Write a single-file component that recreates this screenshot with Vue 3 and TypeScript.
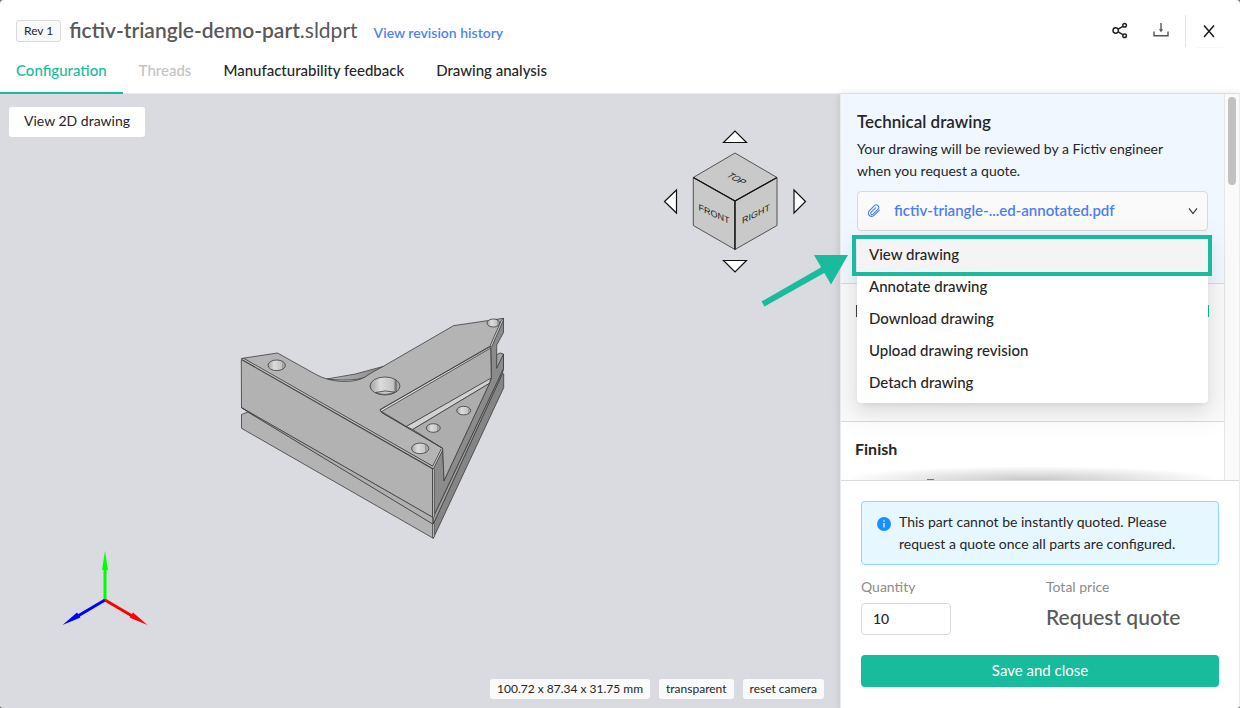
<script setup lang="ts">
import { ref } from 'vue'

interface Tab {
  label: string
  disabled?: boolean
}

interface Hole {
  cx: number
  cy: number
  rx: number
  ry: number
}

const tabs: Tab[] = [
  { label: 'Configuration' },
  { label: 'Threads', disabled: true },
  { label: 'Manufacturability feedback' },
  { label: 'Drawing analysis' },
]
const activeTab = ref('Configuration')

const drawingActions: string[] = [
  'View drawing',
  'Annotate drawing',
  'Download drawing',
  'Upload drawing revision',
  'Detach drawing',
]

const holes: Hole[] = [
  { cx: 46.7, cy: 60.3, rx: 8.7, ry: 5.3 },
  { cx: 190.2, cy: 143.4, rx: 8.7, ry: 5.3 },
  { cx: 203.3, cy: 123, rx: 7, ry: 4.3 },
  { cx: 233.7, cy: 105.6, rx: 7, ry: 4.3 },
  { cx: 263.3, cy: 18, rx: 6.3, ry: 4 },
]

const quantity = ref('10')
</script>

<template>
  <div class="page">
    <header class="header">
      <div class="title-row">
        <span class="rev">Rev 1</span>
        <div class="heading">
          <h1 class="title">fictiv-triangle-demo-part<span class="ext">.sldprt</span></h1>
          <a class="history" href="#">View revision history</a>
        </div>
        <div class="actions">
          <button class="icon-btn" type="button" aria-label="Share">
            <svg width="16" height="18" viewBox="0 0 16 18" fill="none" stroke="#222" stroke-width="1.5">
              <circle cx="3.7" cy="8.500" r="2.700" />
              <circle cx="12.600" cy="3.200" r="1.800" />
              <circle cx="12.600" cy="13.800" r="1.800" />
              <path d="M6.200 7.100 L10.900 4.300 M6.200 9.900 L10.900 12.700" />
            </svg>
          </button>
          <button class="icon-btn" type="button" aria-label="Download">
            <svg width="16" height="18" viewBox="0 0 16 18" fill="none" stroke="#555" stroke-width="1.4">
              <path d="M1 9.500 V13.800 H15 V9.500" />
              <path d="M8 1 V8" />
              <path d="M5.800 7.200 H10.200 L8 10.200 Z" fill="#555" stroke="none" />
            </svg>
          </button>
          <span class="divider"></span>
          <button class="close" type="button" aria-label="Close">
            <svg width="12" height="14" viewBox="0 0 12 14" fill="none" stroke="#1a1a1a" stroke-width="1.5">
              <path d="M1 1.500 L11 13 M11 1.500 L1 13" />
            </svg>
          </button>
        </div>
      </div>
      <nav class="tabs">
        <button
          v-for="tab in tabs"
          :key="tab.label"
          type="button"
          class="tab"
          :class="{ active: tab.label === activeTab }"
          :disabled="tab.disabled"
          @click="activeTab = tab.label"
        >{{ tab.label }}</button>
      </nav>
    </header>

    <div class="body">
      <main class="viewer">
        <button class="view-2d" type="button">View 2D drawing</button>

        <svg class="cube" width="180" height="180" viewBox="0 0 180 180">
          <g fill="#fff" stroke="#111" stroke-width="1.2">
            <path d="M73.5 32.5 L85 21 L96.5 32.5 Z" />
            <path d="M73.5 150.5 L85 162 L96.5 150.5 Z" />
            <path d="M26.5 80 L14.5 91.5 L26.5 103 Z" />
            <path d="M144 80 L155.500 91.500 L144 103 Z" />
          </g>
          <g fill="#c9c9ca" stroke="#444" stroke-width="0.900">
            <path d="M85 43 L127 67.500 L85 91 L43.300 67.500 Z" />
            <path d="M43.300 67.500 L85 91 V139.500 L43.300 115.500 Z" />
            <path d="M127 67.500 L85 91 V139.500 L127 115.500 Z" />
          </g>
          <path d="M43.300 67.500 L85 91 L127 67.500 M85 91 V139.500" fill="none" stroke="#111" stroke-width="1.300" />
          <text class="face" transform="translate(64 107) skewY(24)" text-anchor="middle">FRONT</text>
          <text class="face" transform="translate(106 107) skewY(-27)" text-anchor="middle">RIGHT</text>
          <text class="face" transform="translate(83.500 70.500) rotate(30) skewX(-30)" text-anchor="middle">TOP</text>
        </svg>

        <svg class="model" width="290" height="240" viewBox="0 0 290 240" stroke-linejoin="round">
          <defs>
            <linearGradient id="bore" x1="0" x2="1">
              <stop offset="0" stop-color="#a2a2a2" />
              <stop offset="0.35" stop-color="#dcdcdc" />
              <stop offset="0.78" stop-color="#c4c4c4" />
              <stop offset="0.8" stop-color="#9a9a9a" />
              <stop offset="1" stop-color="#b4b4b4" />
            </linearGradient>
            <linearGradient id="cove" x1="0" x2="1">
              <stop offset="0" stop-color="#b8b8b8" />
              <stop offset="0.6" stop-color="#9c9c9c" />
              <stop offset="1" stop-color="#858585" />
            </linearGradient>
          </defs>
          <g stroke="#3c3c3c" stroke-width="0.800">
            <path d="M96.700 74 Q125 70.500 153 61.500 L145 67 Q133 78 96.700 74 Z" fill="url(#cove)" />
            <!-- lower slab -->
            <path d="M18 107 L11.500 109.500 V123.300 L203.300 233.300 V219 Z" fill="#b3b3b3" />
            <path d="M203.300 219 L272.500 68.300 L273.700 69 V82.700 L203.300 233.300 Z" fill="#858585" />
            <path d="M203.300 212.300 L273.500 63.500 L272.500 68.300 L203.300 219 Z" fill="#a2a2a2" />
            <!-- right side of the upper body -->
            <path d="M266 50 L270 48 L273.500 49 V63.500 L266 66 Z" fill="#a4a4a4" />
            <path d="M203 162 L212.700 143.300 L214 175.700 L259.500 78 L261.500 73.300 L260.700 41.500 L273.500 13.300 V27.500 L266.700 40 V63.300 L273.500 49 V63.500 L203 212.300 Z" fill="#8b8b8b" />
            <!-- top face -->
            <path d="M11.300 53.500 L47.500 48 L86 69.500 C100 77.500 124 79 135 72 Q142 67 153 61.500 L223.500 20.700 L273.500 13.300 L260.700 41.500 L150 104.500 L151.700 107.500 L212.700 143.300 L203 163.300 Z" fill="#b4b4b4" />
            <!-- pocket -->
            <path d="M151.700 106.500 L260.700 43 L261.300 73.300 L176.300 121.500 Z" fill="#aeaeae" />
            <path d="M176.300 121.500 L260.700 73.300 L259.500 78.300 L182.700 124.500 Z" fill="#d2d2d2" />
            <path d="M182.700 124.500 L259.500 78.300 L214 175.700 L212.700 143.300 Z" fill="#adadad" />
            <path d="M150 105 L260.700 40.700" fill="none" />
            <path d="M150 105 L151.700 107.500 L212.700 143.300" fill="none" />
            <!-- front face -->
            <path d="M11.300 54.500 L202.700 164 V212.300 L11.500 102.700 Z" fill="#b2b2b2" />
            <path d="M11.500 102.700 L202.700 212.300 V219 L18 107 Z" fill="#b0b0b0" />
          </g>
          <!-- bevels -->
          <g fill="none" stroke="#3c3c3c" stroke-width="2.600">
            <path d="M13 54 L203 162.500 L212 144.500" />
            <path d="M203.700 164 V212 M203.700 219 V232" />
            <path d="M261 41 L272.500 15" />
          </g>
          <g fill="none" stroke="#c2c2c2" stroke-width="1.200">
            <path d="M13 54 L203 162.500 L212 144.500" />
            <path d="M203.700 164 V212 M203.700 219 V232" />
            <path d="M261 41 L272.500 15" />
          </g>
          <g fill="url(#bore)" stroke="#3c3c3c" stroke-width="0.800">
            <ellipse v-for="(h, i) in holes" :key="i" :cx="h.cx" :cy="h.cy" :rx="h.rx" :ry="h.ry" />
            <ellipse cx="155" cy="81" rx="15" ry="9" />
            <path d="M145.500 87.500 Q155 84.500 165 87.200 Q155 91.500 145.500 87.500 Z" fill="#c8c8c8" />
            <path d="M166 75 V87" />
          </g>
        </svg>

        <svg class="triad" width="100" height="84" viewBox="0 0 100 84">
          <g stroke-width="3" fill="none">
            <path d="M50 52 V20" stroke="#0f0" />
            <path d="M50 52 L22 68.500" stroke="#00f" />
            <path d="M50 52 L78 68.500" stroke="#f00" />
          </g>
          <path d="M50 3 L53 22 H47 Z" fill="#0f0" />
          <path d="M7.500 77 L25.500 69.500 L22 64.500 Z" fill="#00f" />
          <path d="M92.500 77 L74.500 69.500 L78 64.500 Z" fill="#f00" />
        </svg>

        <div class="viewer-status">
          <span class="chip">100.72 x 87.34 x 31.75 mm</span>
          <button class="chip" type="button">transparent</button>
          <button class="chip" type="button">reset camera</button>
        </div>
      </main>

      <aside class="sidebar">
        <div class="scroller">
          <div class="sections">
            <section class="section drawing">
              <h2 class="section-title">Technical drawing</h2>
              <p class="section-text">Your drawing will be reviewed by a Fictiv engineer when you request a quote.</p>
              <div class="dropdown">
                <button class="file" type="button" aria-haspopup="menu" aria-expanded="true">
                  <svg width="14" height="14" viewBox="0 0 14 14" fill="none" stroke="#4a7ff5" stroke-width="1.1" stroke-linecap="round">
                    <path d="M12.300 6.200 L7.100 11.400 A3.300 3.300 0 0 1 2.300 6.800 L7.400 1.700 A2.500 2.500 0 0 1 11 5.200 L6.100 10.100 A1.300 1.300 0 0 1 4.200 8.200 L8.600 3.800" />
                  </svg>
                  <span class="file-name">fictiv-triangle-...ed-annotated.pdf</span>
                  <svg width="10" height="8" viewBox="0 0 10 8" fill="none" stroke="#333" stroke-width="1.200">
                    <path d="M1 1.300 L5 6.500 L9 1.300" />
                  </svg>
                </button>
                <div class="menu" role="menu">
                  <button v-for="action in drawingActions" :key="action" class="menu-item" type="button" role="menuitem">{{ action }}</button>
                </div>
                <div class="highlight"></div>
                <svg class="pointer" width="90" height="56" viewBox="0 0 90 56" fill="#18bc9c">
                  <path d="M4.500 53.500 L1.500 48.500 L62.500 13.500 L66 19 Z" />
                  <path d="M54 2 H88 L71 31.500 Z" />
                </svg>
              </div>
            </section>
            <section class="section covered">
              <span class="edge dark"></span>
              <span class="edge teal"></span>
            </section>
            <section class="section finish">
              <h2 class="section-title strong">Finish</h2>
              <span class="radio-top"></span>
            </section>
          </div>
          <div class="track"><div class="thumb"></div></div>
        </div>

        <footer class="summary">
          <div class="alert" role="status">
            <svg width="14" height="14" viewBox="0 0 14 14">
              <circle cx="7" cy="7" r="7" fill="#1890ff" />
              <rect x="6.400" y="6" width="1.200" height="4.500" fill="#fff" />
              <circle cx="7" cy="4" r="0.800" fill="#fff" />
            </svg>
            <p>This part cannot be instantly quoted. Please request a quote once all parts are configured.</p>
          </div>
          <div class="totals">
            <div class="field">
              <label class="label" for="quantity">Quantity</label>
              <input id="quantity" v-model="quantity" class="quantity" type="text" />
            </div>
            <div class="field">
              <span class="label">Total price</span>
              <span class="price">Request quote</span>
            </div>
          </div>
          <button class="save" type="button">Save and close</button>
        </footer>
      </aside>
    </div>
  </div>
</template>

<style>
body {
  margin: 0;
  background: #777;
}
</style>

<style scoped>
* {
  box-sizing: border-box;
}

.page {
  display: flex;
  flex-direction: column;
  height: 100vh;
  border-radius: 4px;
  overflow: hidden;
  background: #fff;
  color: #262626;
  font-family: Lato, "Open Sans", sans-serif;
  font-size: 14px;
  line-height: 22px;
}

button,
input {
  margin: 0;
  font: inherit;
  color: inherit;
}

button {
  padding: 0;
  border: 0;
  background: none;
  cursor: pointer;
}

h1,
h2,
p {
  margin: 0;
}

svg {
  display: block;
  flex: none;
}

.header {
  border-bottom: 1px solid #ebebeb;
}

.title-row {
  display: flex;
  align-items: center;
  height: 48px;
  padding: 14px 16px 0;
}

.rev {
  padding: 0 7px;
  border: 1px solid #d9d9d9;
  border-radius: 3px;
  background: #fafafa;
  font-size: 12px;
  line-height: 20px;
}

.heading {
  display: flex;
  align-items: baseline;
  gap: 16px;
  margin-left: 8px;
  padding-bottom: 3px;
}

.title {
  color: #595959;
  font-size: 21px;
  font-weight: 600;
  line-height: 28px;
}

.ext {
  font-weight: 400;
}

.history {
  color: #4f82f5;
  font-weight: 600;
  text-decoration: none;
}

.actions {
  display: flex;
  align-items: center;
  gap: 25px;
  margin-left: auto;
}

.divider {
  width: 1px;
  height: 32px;
  margin-left: -9px;
  background: #e4e4e4;
}

.close {
  display: flex;
  align-items: center;
  justify-content: center;
  width: 32px;
  height: 32px;
  margin-left: -18px;
  margin-right: -1px;
  border-radius: 4px;
  box-shadow: 0 1px 1px rgba(0, 0, 0, 0.03);
}

.tabs {
  display: flex;
  height: 45px;
}

.tab {
  height: 46px;
  padding: 0 16px;
  border-bottom: 2px solid transparent;
  font-size: 15px;
  font-weight: 500;
}

.tab.active {
  border-color: #18bc9c;
  color: #18bc9c;
}

.tab:disabled {
  color: #c4c4c4;
}

.body {
  display: flex;
  flex: 1;
  min-height: 0;
}

.viewer {
  position: relative;
  flex: 1;
  min-width: 0;
  background: #dadbe0;
}

.view-2d {
  position: absolute;
  top: 13px;
  left: 9px;
  height: 30px;
  padding: 0 15px 2px;
  border-radius: 3px;
  background: #fff;
}

.cube {
  position: absolute;
  top: 16px;
  right: 10px;
}

.face {
  fill: #222;
  font-family: "Liberation Sans", Arial, sans-serif;
  font-size: 9px;
}

.model {
  position: absolute;
  top: 211px;
  left: 230px;
}

.triad {
  position: absolute;
  bottom: 76px;
  left: 55px;
}

.viewer-status {
  position: absolute;
  right: 16px;
  bottom: 9px;
  display: flex;
  gap: 9px;
}

.chip {
  padding: 0 7px;
  border-radius: 3px;
  background: #fafafa;
  font-size: 12px;
  line-height: 20px;
}

.sidebar {
  position: relative;
  display: flex;
  flex-direction: column;
  width: 400px;
  border-right: 1px solid #ebebeb;
  border-left: 1px solid #ebebeb;
  background: #fff;
  box-shadow: 0 0 8px rgba(0, 0, 0, 0.12);
}

.scroller {
  display: flex;
  flex: 1;
  min-height: 0;
}

.sections {
  display: flex;
  flex: 1;
  flex-direction: column;
}

.track {
  width: 15px;
  padding: 3px;
  border-left: 1px solid #e6e6e6;
  background: #fafafa;
}

.thumb {
  width: 8px;
  height: 88px;
  border-radius: 4px;
  background: #c1c1c1;
}

.section {
  padding: 16px;
  border-bottom: 1px solid #d9d9d9;
}

.drawing {
  padding-bottom: 52px;
  background: #f0f7ff;
}

.section-title {
  font-size: 17px;
  font-weight: 600;
  line-height: 24px;
}

.strong {
  font-size: 16px;
  font-weight: 700;
}

.section-text {
  margin: 4px 0 9px;
  padding-right: 24px;
}

.dropdown {
  position: relative;
}

.file {
  display: flex;
  align-items: center;
  gap: 13px;
  width: 100%;
  height: 40px;
  padding: 0 9px;
  border: 1px solid #d9d9d9;
  border-radius: 4px;
  background: #fafafa;
}

.file-name {
  flex: 1;
  padding-bottom: 2px;
  color: #4a7ff5;
  font-size: 15px;
  font-weight: 600;
  text-align: left;
}

.menu {
  position: absolute;
  top: 44px;
  right: 0;
  left: 0;
  z-index: 2;
  display: flex;
  flex-direction: column;
  padding: 4px 0;
  border-radius: 4px;
  background: #fff;
  box-shadow: 0 3px 6px -4px rgba(0, 0, 0, 0.12), 0 6px 16px rgba(0, 0, 0, 0.08), 0 9px 28px 8px rgba(0, 0, 0, 0.05);
}

.menu-item {
  height: 32px;
  padding: 0 12px 2px;
  font-size: 15px;
  font-weight: 500;
  text-align: left;
}

.menu-item:first-child {
  background: #f4f4f4;
}

.highlight {
  position: absolute;
  top: 44px;
  right: -4px;
  left: -5px;
  z-index: 3;
  height: 41px;
  border: 4px solid #18bc9c;
}

.pointer {
  position: absolute;
  top: 62px;
  left: -97px;
  z-index: 3;
}

.covered {
  display: flex;
  justify-content: space-between;
  height: 138px;
  padding: 21px 15px;
  background: #fafafa;
}

.edge {
  width: 1px;
  height: 12px;
}

.dark {
  background: #444;
}

.teal {
  background: #18bc9c;
}

.finish {
  position: relative;
  flex: 1;
  padding: 15px 14px 0;
  border-bottom: 0;
  overflow: hidden;
}

.finish::after {
  content: "";
  position: absolute;
  right: 0;
  bottom: 0;
  left: 0;
  height: 14px;
  background: radial-gradient(farthest-side at 50% 100%, rgba(0, 0, 0, 0.22), rgba(0, 0, 0, 0));
}

.radio-top {
  position: absolute;
  bottom: 0;
  left: 86px;
  z-index: 1;
  width: 7px;
  height: 1px;
  background: #4f74e8;
}

.summary {
  display: flex;
  flex-direction: column;
  padding: 20px 20px 21px;
  border-top: 1px solid #d9d9d9;
}

.alert {
  display: flex;
  gap: 8px;
  padding: 9px 15px;
  border: 1px solid #91d5ff;
  border-radius: 4px;
  background: #e6f7ff;
}

.alert svg {
  margin-top: 6px;
}

.totals {
  display: grid;
  grid-template-columns: 1fr 1fr;
  gap: 12px;
  margin: 11px 0 20px;
}

.field {
  display: flex;
  flex-direction: column;
  gap: 5px;
}

.label {
  color: #8c8c8c;
}

.quantity {
  width: 90px;
  height: 32px;
  padding: 0 11px 2px;
  border: 1px solid #d9d9d9;
  border-radius: 4px;
  background: #fff;
  font-weight: 500;
}

.price {
  color: #595959;
  font-size: 21px;
  font-weight: 500;
  line-height: 28px;
}

.save {
  height: 32px;
  padding-bottom: 2px;
  border-radius: 4px;
  background: #18bc9c;
  color: #fff;
  font-size: 15px;
}
</style>
